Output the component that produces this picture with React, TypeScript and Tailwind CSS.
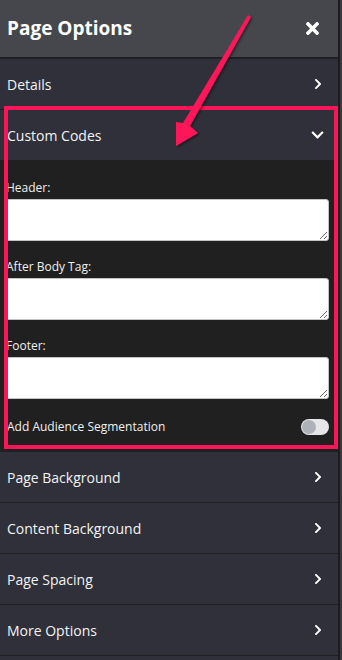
import React from "react";
import { FaTimes, FaChevronRight, FaChevronDown } from "react-icons/fa";

const font = { fontFamily: '"Open Sans", "Noto Sans", sans-serif' };

function Row({ label, open }: { label: string; open?: boolean }) {
  return (
    <div className="h-[51px] flex items-center justify-between pl-[7px] pr-[15px] bg-[#2f3039] border-b border-[#1f2024]">
      <span className="text-[14px] text-[#f3f3f3]">{label}</span>
      {open ? (
        <FaChevronDown className="text-white w-[15px] h-[14px] mr-[-2px]" />
      ) : (
        <FaChevronRight className="text-white w-[10px] h-[12px]" />
      )}
    </div>
  );
}

function Field({ label, first }: { label: string; first?: boolean }) {
  return (
    <div className={first ? "" : "mt-[17px]"}>
      <div className="text-[12px] leading-[18px] mb-[2px] text-[#f0f0f0]">{label}</div>
      <textarea className="block w-full h-[42px] bg-white border border-[#c4c4c4] rounded-[3px]" />
    </div>
  );
}

export default function App() {
  return (
    <div className="relative w-[342px] h-[660px] bg-[#3a3a3d] flex overflow-hidden" style={font}>
      <div className="w-[340px] h-full bg-[#2f3039] border-r-2 border-[#1b1c20] flex flex-col">
        <div className="h-[59px] shrink-0 flex items-center justify-between pl-[7px] pr-[16px] bg-[#46474c] border-b-2 border-[#1f2024]">
          <span className="text-[19px] font-bold text-white">Page Options</span>
          <FaTimes className="text-white w-[19px] h-[19px]" />
        </div>
        <Row label="Details" />
        <Row label="Custom Codes" open />
        <div className="bg-[#202020] pt-[18px] pb-[15px] pl-[6px] pr-[9px] border-b border-[#1f2024]">
          <Field label="Header:" first />
          <Field label="After Body Tag:" />
          <Field label="Footer:" />
          <div className="mt-[19px] h-[18px] flex items-center justify-between">
            <span className="text-[12px] text-[#f0f0f0] pl-[1px]">Add Audience Segmentation</span>
            <div className="w-[28px] h-[16px] rounded-full bg-[#e6e6e8] p-[1px] flex items-center">
              <div className="w-[14px] h-[14px] rounded-full bg-[#aeb1b8]" />
            </div>
          </div>
        </div>
        <Row label="Page Background" />
        <Row label="Content Background" />
        <Row label="Page Spacing" />
        <Row label="More Options" />
      </div>

      <div className="absolute left-[4px] top-[106px] w-[334px] h-[343px] border-[4px] border-[#fd1559] pointer-events-none" />

      <svg className="absolute left-0 top-0 pointer-events-none" width="342" height="200" viewBox="0 0 342 200">
        <defs>
          <filter id="sh" x="-20%" y="-20%" width="140%" height="140%">
            <feDropShadow dx="1.5" dy="1.5" stdDeviation="1.2" floodColor="#000" floodOpacity="0.45" />
          </filter>
        </defs>
        <polygon
          points="248,15 251,17 190,126 198,133 176,146 176,122 183,123"
          fill="#fd1559"
          filter="url(#sh)"
        />
      </svg>
    </div>
  );
}
